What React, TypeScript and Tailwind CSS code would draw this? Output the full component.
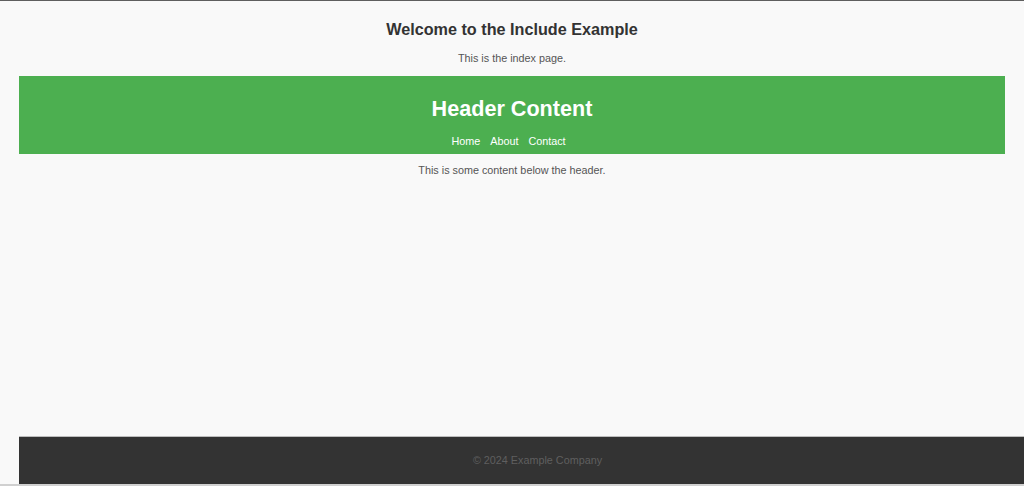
export default function App() {
  return (
    <div
      className="flex h-[486px] flex-col overflow-hidden border-t border-[#5f5f5f] bg-[#f9f9f9] text-[#333]"
      style={{ fontFamily: '"Liberation Sans", Arial, sans-serif' }}
    >
      <div className="flex flex-1 flex-col px-[19px]">
        <h1 className="mt-[18px] text-center text-[16.2px] font-bold leading-[20px] text-[#333]">
          Welcome to the Include Example
        </h1>
        <p className="mt-[13px] text-center text-[10.8px] leading-[13px] text-[#555]">This is the index page.</p>

        <header className="mt-[11px] bg-[#4caf50] pb-[6px] pt-[20px] text-center text-white">
          <h2 className="text-[21.6px] font-bold leading-[26px]">Header Content</h2>
          <nav className="mt-[13px] flex justify-center gap-[10px] pr-[7px] text-[10.8px] leading-[13px]">
            <a href="#">Home</a>
            <a href="#">About</a>
            <a href="#">Contact</a>
          </nav>
        </header>

        <p className="mt-[10px] text-center text-[10.8px] leading-[13px] text-[#555]">
          This is some content below the header.
        </p>

        <div className="flex-1" />

        <footer className="mr-[-19px] flex h-[48px] items-center justify-center border-t border-[#bdbdbd] bg-[#333] pl-[32px] text-[10.8px] text-[#5f5f5f]">
          © 2024 Example Company
        </footer>
      </div>
      <div className="h-[2px] bg-[#d0d0d0]" />
    </div>
  );
}
